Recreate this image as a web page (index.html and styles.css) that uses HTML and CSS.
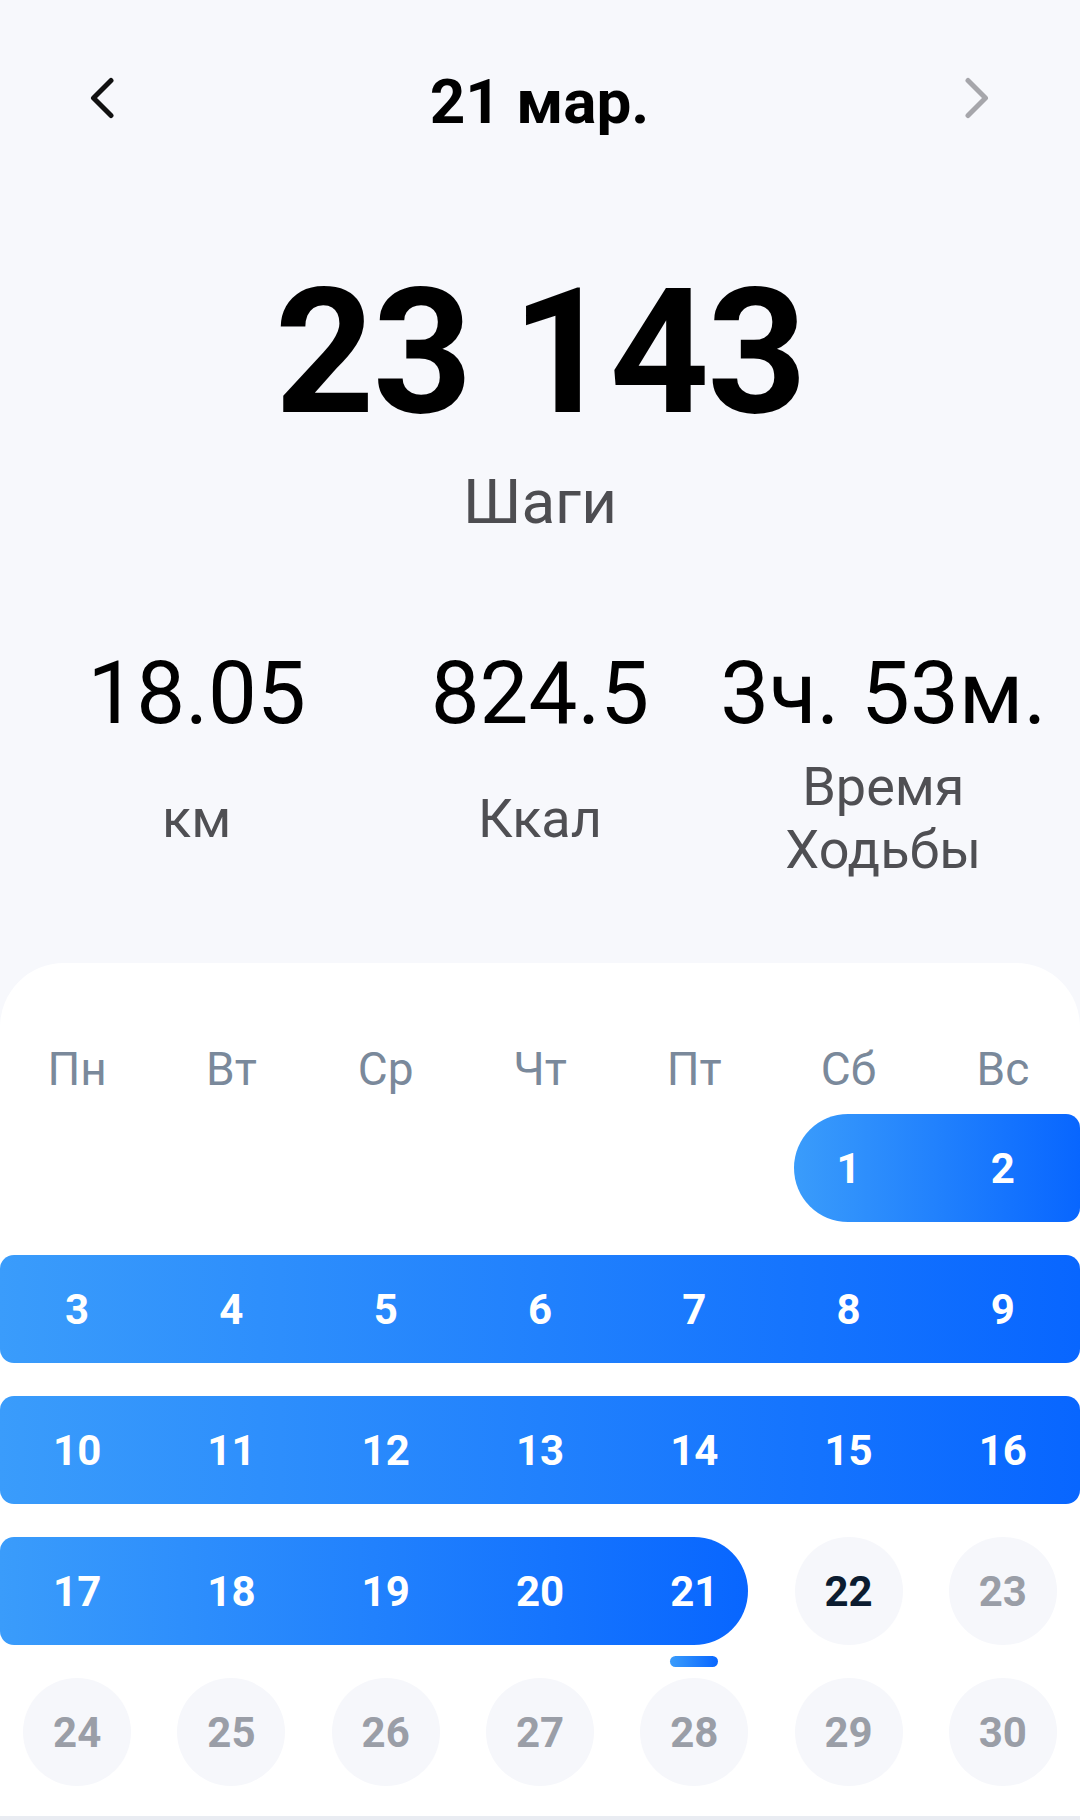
FILE: index.html
```html
<!DOCTYPE html>
<html>
<head>
    <title>Шаги</title>
    <link rel="stylesheet" href="styles.css">
</head>
<body>
    <div class="screen">
        <header class="topbar">
            <svg class="nav nav-prev" width="30" height="46" viewBox="0 0 30 46">
                <path d="M21 5.5 L3.5 23 L21 40.5" />
            </svg>
            <h1 class="date">21 мар.</h1>
            <svg class="nav nav-next" width="30" height="46" viewBox="0 0 30 46">
                <path d="M9 5.5 L26.5 23 L9 40.5" />
            </svg>
        </header>

        <section class="steps">
            <div class="steps-value">23 143</div>
            <div class="steps-label">Шаги</div>
        </section>

        <section class="stats">
            <div class="stat">
                <div class="stat-value">18.05</div>
                <div class="stat-label">км</div>
            </div>
            <div class="stat">
                <div class="stat-value">824.5</div>
                <div class="stat-label">Ккал</div>
            </div>
            <div class="stat">
                <div class="stat-value">3ч. 53м.</div>
                <div class="stat-label">Время<br>Ходьбы</div>
            </div>
        </section>

        <section class="calendar">
            <div class="weekdays">
                <span>Пн</span><span>Вт</span><span>Ср</span><span>Чт</span><span>Пт</span><span>Сб</span><span>Вс</span>
            </div>
            <div class="weeks">
                <div class="week">
                    <div class="week-track"><div class="range range-first"></div></div>
                    <div class="week-days">
                        <span class="day blank"></span>
                        <span class="day blank"></span>
                        <span class="day blank"></span>
                        <span class="day blank"></span>
                        <span class="day blank"></span>
                        <span class="day">1</span>
                        <span class="day">2</span>
                    </div>
                </div>
                <div class="week">
                    <div class="week-track"><div class="range range-full"></div></div>
                    <div class="week-days">
                        <span class="day">3</span>
                        <span class="day">4</span>
                        <span class="day">5</span>
                        <span class="day">6</span>
                        <span class="day">7</span>
                        <span class="day">8</span>
                        <span class="day">9</span>
                    </div>
                </div>
                <div class="week">
                    <div class="week-track"><div class="range range-full"></div></div>
                    <div class="week-days">
                        <span class="day">10</span>
                        <span class="day">11</span>
                        <span class="day">12</span>
                        <span class="day">13</span>
                        <span class="day">14</span>
                        <span class="day">15</span>
                        <span class="day">16</span>
                    </div>
                </div>
                <div class="week">
                    <div class="week-track"><div class="range range-last"></div></div>
                    <div class="week-days">
                        <span class="day">17</span>
                        <span class="day">18</span>
                        <span class="day">19</span>
                        <span class="day">20</span>
                        <span class="day today">21</span>
                        <span class="day next">22</span>
                        <span class="day future">23</span>
                    </div>
                </div>
                <div class="week">
                    <div class="week-days">
                        <span class="day future">24</span>
                        <span class="day future">25</span>
                        <span class="day future">26</span>
                        <span class="day future">27</span>
                        <span class="day future">28</span>
                        <span class="day future">29</span>
                        <span class="day future">30</span>
                    </div>
                </div>
            </div>
        </section>
        <div class="bottom-edge"></div>
    </div>
</body>
</html>
```

FILE: styles.css
```css
body {
    margin: 0;
    background-color: #f7f8fc;
    font-family: Roboto, "Noto Sans", sans-serif;
    color: #000;
}
.screen {
    width: 1080px;
    height: 1820px;
    overflow: hidden;
}

/* top bar */
.topbar {
    display: grid;
    grid-template-columns: 1fr auto 1fr;
    padding: 66px 91px 0 90px;
}
.date {
    margin: 0;
    font-size: 62px;
    line-height: 72px;
    font-weight: 700;
}
.nav {
    margin-top: 9px;
    fill: none;
    stroke-width: 5;
    stroke-linecap: round;
    stroke-linejoin: round;
}
.nav-prev {
    stroke: #111;
}
.nav-next {
    stroke: #a6a6ab;
    justify-self: end;
}

/* steps */
.steps {
    margin-top: 128px;
    text-align: center;
}
.steps-value {
    font-size: 174px;
    line-height: 174px;
    font-weight: 700;
    letter-spacing: -2px;
}
.steps-label {
    margin-top: 26px;
    font-size: 62px;
    line-height: 72px;
    color: #4d4d51;
}

/* stats */
.stats {
    display: grid;
    grid-template-columns: repeat(3, 1fr);
    padding: 0 25px;
    margin-top: 105px;
    text-align: center;
}
.stat-value {
    font-size: 87px;
    line-height: 100px;
    white-space: nowrap;
}
.stat-label {
    margin-top: 12px;
    height: 126px;
    display: flex;
    align-items: center;
    justify-content: center;
    font-size: 54px;
    line-height: 63px;
    color: #4f4f53;
}

/* calendar */
.calendar {
    margin-top: 82px;
    padding: 79px 0 30px;
    background-color: #fff;
    border-radius: 64px 64px 0 0;
}
.weekdays {
    display: grid;
    grid-template-columns: repeat(7, 1fr);
    text-align: center;
    font-size: 46px;
    line-height: 54px;
    color: #7a899b;
    margin-bottom: 18px;
}
.weeks {
    display: flex;
    flex-direction: column;
    gap: 33px;
}
.week {
    display: grid;
    height: 108px;
}
.week-track,
.week-days {
    grid-area: 1 / 1;
    display: grid;
    grid-template-columns: repeat(7, 1fr);
}
.range {
    background: linear-gradient(to right, #3a9cfb, #0866ff);
    border-radius: 14px;
}
.range-first {
    grid-column: 6 / 8;
    margin-left: 23px;
    border-radius: 54px 14px 14px 54px;
}
.range-full {
    grid-column: 1 / 8;
}
.range-last {
    grid-column: 1 / 6;
    margin-right: 23px;
    border-radius: 14px 54px 54px 14px;
}
.day {
    justify-self: center;
    width: 108px;
    height: 108px;
    border-radius: 50%;
    display: flex;
    align-items: center;
    justify-content: center;
    font-size: 42px;
    font-weight: 700;
    color: #fff;
}
.day.future,
.day.next {
    background-color: #f6f7fb;
    color: #9a9ea7;
}
.day.next {
    color: #0c1c30;
}
.day.today {
    position: relative;
}
.day.today::after {
    content: "";
    position: absolute;
    top: 119px;
    left: 30px;
    width: 48px;
    height: 11px;
    border-radius: 6px;
    background: linear-gradient(to right, #3a9cfb, #0866ff);
}
.bottom-edge {
    height: 4px;
    background-color: #e9ecf2;
}
```
